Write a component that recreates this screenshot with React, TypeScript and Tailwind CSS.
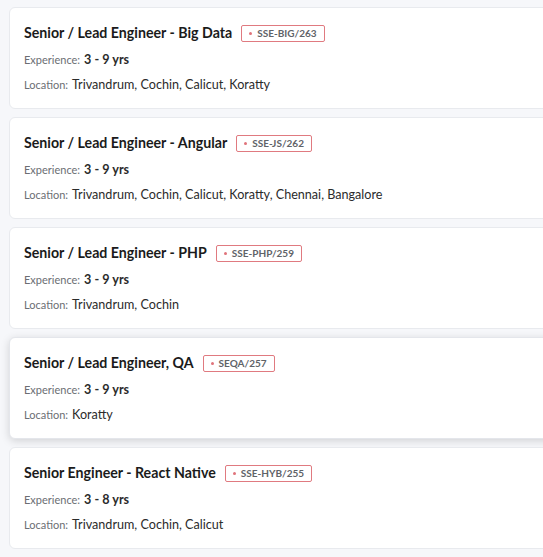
import React from "react";

const jobs = [
  { title: "Senior / Lead Engineer - Big Data", code: "SSE-BIG/263", exp: "3 - 9 yrs", loc: "Trivandrum, Cochin, Calicut, Koratty" },
  { title: "Senior / Lead Engineer - Angular", code: "SSE-JS/262", exp: "3 - 9 yrs", loc: "Trivandrum, Cochin, Calicut, Koratty, Chennai, Bangalore" },
  { title: "Senior / Lead Engineer - PHP", code: "SSE-PHP/259", exp: "3 - 9 yrs", loc: "Trivandrum, Cochin" },
  { title: "Senior / Lead Engineer, QA", code: "SEQA/257", exp: "3 - 9 yrs", loc: "Koratty", hover: true },
  { title: "Senior Engineer - React Native", code: "SSE-HYB/255", exp: "3 - 8 yrs", loc: "Trivandrum, Cochin, Calicut" },
];

export default function App() {
  return (
    <div
      className="w-[543px] h-[557px] overflow-hidden bg-[#f6f7fa] pl-[9px] pt-[7px]"
      style={{ fontFamily: "Lato, 'Open Sans', sans-serif" }}
    >
      <div className="flex flex-col gap-[8px] w-[560px]">
        {jobs.map((j) => (
          <div
            key={j.code}
            className={
              j.hover
                ? "h-[102px] rounded-[6px] border border-[#e4e6eb] bg-white pl-[14px] pt-[15px] shadow-[0_2px_8px_rgba(0,0,0,0.15)]"
                : "h-[102px] rounded-[6px] border border-[#e8eaee] bg-white pl-[14px] pt-[15px]"
            }
          >
            <div className="flex items-center h-[20px]">
              <span className="text-[14.2px] font-bold text-[#1b1b1b] leading-[20px]">{j.title}</span>
              <span className="ml-[9px] flex items-center h-[17px] px-[7px] border border-[#e07a80] rounded-[2px] text-[10px] font-bold text-[#5f6368] leading-none">
                <span className="w-[3px] h-[3px] rounded-full bg-[#e0737a] mr-[5px]" />
                {j.code}
              </span>
            </div>
            <div className="mt-[8px] flex items-baseline h-[20px]">
              <span className="text-[11px] text-[#6b6e73]">Experience:</span>
              <span className="ml-[4px] text-[12.6px] font-bold text-[#2b2b2b]">{j.exp}</span>
            </div>
            <div className="mt-[5px] flex items-baseline h-[20px]">
              <span className="text-[11px] text-[#6b6e73]">Location:</span>
              <span className="ml-[4px] text-[12.6px] text-[#2b2b2b]">{j.loc}</span>
            </div>
          </div>
        ))}
      </div>
    </div>
  );
}
